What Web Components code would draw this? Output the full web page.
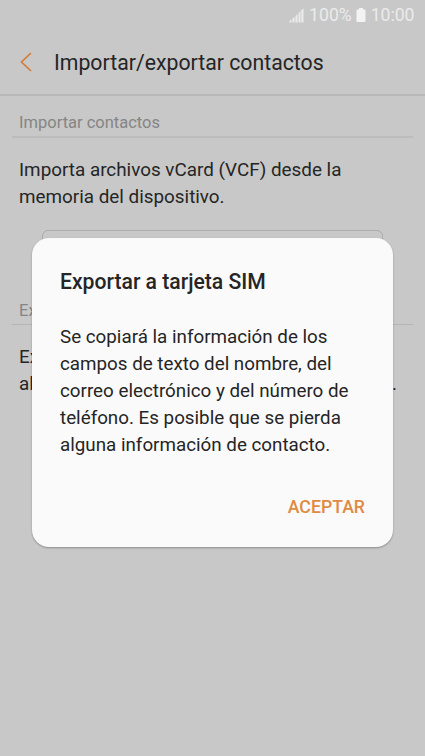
<!DOCTYPE html>
<html lang="es">
<head>
<meta charset="utf-8">
<title>Importar/exportar contactos</title>
<style>
html, body { margin: 0; height: 100%; overflow: hidden; background: #c8c8c8; }
body { font-family: Roboto, "Noto Sans", sans-serif; color: #252525; }
</style>
</head>
<body>
<contacts-screen></contacts-screen>
<script>
const define = (name, html) => customElements.define(name, class extends HTMLElement {
  constructor() {
    super();
    this.attachShadow({ mode: 'open' }).innerHTML = html;
  }
});

define('status-bar', `
<style>
:host { display: flex; height: 30px; align-items: center; justify-content: flex-end; padding-right: 10.5px; box-sizing: border-box; color: #ebebeb; font-size: 17.600px; line-height: 30px; }
.signal { margin-right: 5px; }
.battery { margin: 0 5px 0 4px; }
svg { display: block; }
</style>
<svg class="signal" width="15" height="15" viewBox="0 0 15 15" fill="#ebebeb"><path d="M.5 14.500V13l2-1.500v3zM3.500 14.500v-4l2-1.500v5.500zM6.500 14.500V8l2-2v8.500zM9.500 14.500V5l2-2v11.500zM12.300 14.500V2l2.200-1.500v14z"/></svg>
<span>100%</span>
<svg class="battery" width="10" height="15" viewBox="0 0 10 15" fill="#f3f3f3"><path d="M3 0h4v1.500h1.500Q9.500 1.500 9.500 2.500v10.500Q9.500 14 8.500 14h-7Q.5 14 .5 13V2.500Q.5 1.500 1.500 1.500H3z"/></svg>
<span>10:00</span>`);

define('app-header', `
<style>
:host { display: flex; height: 66px; box-sizing: border-box; align-items: center; padding: 0 0 0 20px; border-bottom: 2px solid #b9b9b9; font-size: 21.250px; }
svg { display: block; margin: 0 22px 1px 0; }
h1 { font: inherit; margin: 0; padding-top: 1px; white-space: nowrap; }
</style>
<svg width="12" height="20" viewBox="0 0 12 20" fill="none" stroke="#d27c38" stroke-width="1.700"><path d="M11 1 1.500 10 11 19"/></svg>
<h1><slot></slot></h1>`);

define('settings-section', `
<style>
:host { display: block; margin: 0 12px; }
h2 { margin: 0; padding-left: 7px; font-size: 16.500px; font-weight: 400; line-height: 20px; height: 23px; color: #858585; border-bottom: var(--rule, 1px solid #b5b5b5); white-space: nowrap; }
.text { padding: 19px 16px 0 7px; font-size: 18.850px; line-height: 27px; white-space: nowrap; }
</style>
<h2><slot name="title"></slot></h2>
<div class="text"><slot></slot></div>`);

define('outline-button', `
<style>
:host { display: block; box-sizing: border-box; margin: 19px 42px 0; height: 48px; border: 1px solid #acacac; border-radius: 6px; }
</style>`);

define('alert-dialog', `
<style>
:host { position: absolute; left: 32px; top: 238px; width: 361px; height: 309px; box-sizing: border-box; padding: 30px 28px 0; border-radius: 17px; background: #fafafa; box-shadow: 0 1px 2px rgba(0,0,0,.3); display: flex; flex-direction: column; }
h2 { margin: 0; font-size: 21.150px; font-weight: 500; line-height: 28px; white-space: nowrap; }
.body { margin-top: 28px; font-size: 18.800px; line-height: 27.100px; white-space: nowrap; }
.action { align-self: flex-end; margin-top: 34.500px; color: #e08a42; font: 500 17.700px/26px Roboto, sans-serif; background: none; border: 0; padding: 0; }
</style>
<h2><slot name="title"></slot></h2>
<div class="body"><slot></slot></div>
<button class="action"><slot name="action"></slot></button>`);

define('contacts-screen', `
<style>
:host { display: block; position: relative; width: 425px; height: 756px; overflow: hidden; background: #c8c8c8; }
main { padding-top: 17px; }
.first { --rule: 2px solid #bcbcbc; }
.second { margin-top: 23px; }
.line { display: flex; justify-content: space-between; }
</style>
<status-bar></status-bar>
<app-header>Importar/exportar contactos</app-header>
<main>
  <settings-section class="first"><span slot="title">Importar contactos</span>Importa archivos vCard (VCF) desde la<br>memoria del dispositivo.</settings-section>
  <outline-button></outline-button>
  <settings-section class="second"><span slot="title">Ex</span><span class="line">Ex</span><span class="line"><span>al</span><span>.</span></span></settings-section>
</main>
<alert-dialog>
  <span slot="title">Exportar a tarjeta SIM</span>
  Se copiará la información de los<br>campos de texto del nombre, del<br>correo electrónico y del número de<br>teléfono. Es posible que se pierda<br>alguna información de contacto.
  <span slot="action">ACEPTAR</span>
</alert-dialog>`);
</script>
</body>
</html>
